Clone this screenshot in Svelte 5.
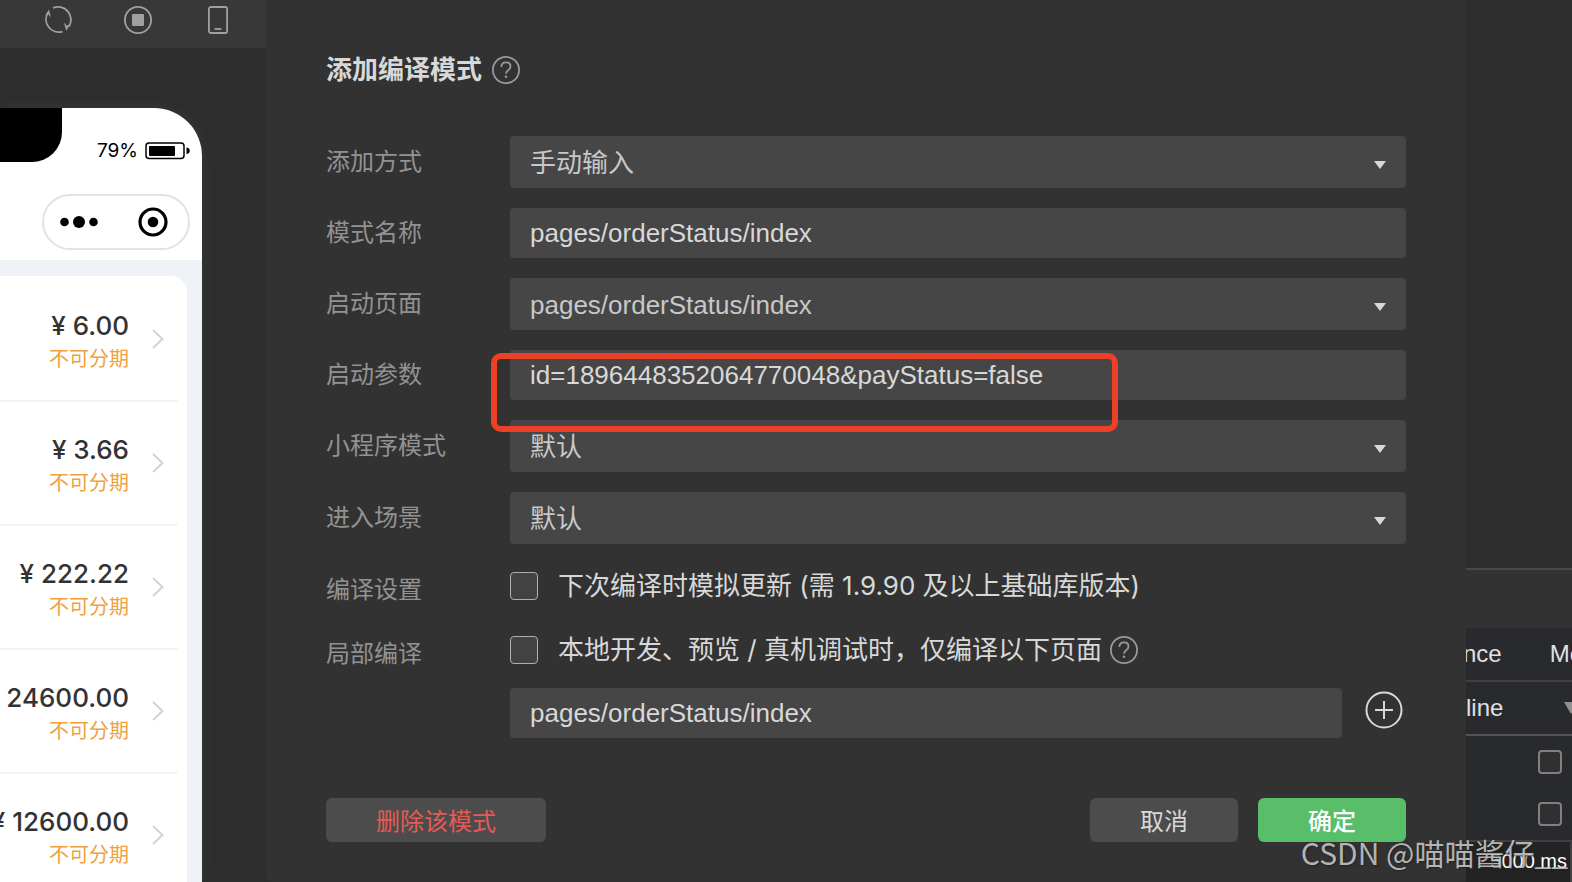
<script lang="ts">
	type Field = {
		id: string;
		label: string;
		type: 'select' | 'input';
		value: string;
		marked?: boolean;
	};

	const fields: Field[] = [
		{ id: 'method', label: '添加方式', type: 'select', value: '手动输入' },
		{ id: 'name', label: '模式名称', type: 'input', value: 'pages/orderStatus/index' },
		{ id: 'page', label: '启动页面', type: 'select', value: 'pages/orderStatus/index' },
		{
			id: 'query',
			label: '启动参数',
			type: 'input',
			value: 'id=1896448352064770048&payStatus=false',
			marked: true
		},
		{ id: 'app-mode', label: '小程序模式', type: 'select', value: '默认' },
		{ id: 'scene', label: '进入场景', type: 'select', value: '默认' }
	];

	const orders = ['6.00', '3.66', '222.22', '24600.00', '12600.00'];

	let simulateUpdate = $state(false);
	let partialCompile = $state(false);
	let partialPage = $state('pages/orderStatus/index');
</script>

{#snippet helpIcon()}
	<svg class="help" viewBox="0 0 28 28" aria-hidden="true">
		<circle cx="14" cy="14" r="13.1" />
		<path d="M9.4 11c0-2.9 1.9-4.6 4.6-4.6s4.5 1.6 4.5 4c0 1.8-.9 2.8-2.4 3.9-1.5 1.1-2 1.8-2 3.5" />
		<circle class="dot" cx="14" cy="20.8" r="1.3" />
	</svg>
{/snippet}

<div class="workspace">
	<aside class="simulator">
		<div class="toolbar">
			<button aria-label="刷新">
				<svg viewBox="0 0 28 28">
					<path d="M9 2A12.8 12.8 0 0 1 25 20.5M18.5 25.6A12.8 12.8 0 0 1 4 6.5" />
					<path class="solid" d="M4.900 3.600 1.300 9.800 4.200 8.200 7 11.500zM22.300 24.800 26 18.500 22.600 19.600 19.800 16.500z" />
				</svg>
			</button>
			<button aria-label="停止">
				<svg viewBox="0 0 28 28">
					<circle cx="14" cy="14" r="13.1" />
					<rect class="solid" x="8" y="8" width="12" height="12" rx="1" />
				</svg>
			</button>
			<button aria-label="设备">
				<svg viewBox="0 0 28 28">
					<rect x="4.9" y="1" width="18.2" height="26" rx="2" />
					<path d="M10.5 23h7" />
				</svg>
			</button>
		</div>

		<div class="phone">
			<div class="status-bar">
				<div class="notch"></div>
				<span>79%</span>
				<svg class="battery" viewBox="0 0 45 18">
					<rect x="1" y="1" width="38" height="15.5" rx="3" fill="none" stroke="#000" stroke-width="1.5" />
					<rect x="4" y="4" width="26" height="10" rx="1" />
					<path d="M41.5 5.5c2 0 3.3 1.5 3.3 3.3s-1.3 3.3-3.3 3.3z" />
				</svg>
			</div>
			<div class="nav-bar">
				<div class="capsule">
					<svg class="dots" viewBox="0 0 38 12">
						<circle cx="4.5" cy="6" r="4.3" />
						<circle cx="19" cy="6" r="6" />
						<circle cx="33.5" cy="6" r="4.3" />
					</svg>
					<svg class="target" viewBox="0 0 30 30">
						<circle cx="15" cy="15" r="13" fill="none" stroke="#000" stroke-width="3.2" />
						<circle cx="15" cy="15" r="5.3" />
					</svg>
				</div>
			</div>
			<div class="orders">
				<ul>
					{#each orders as price}
						<li>
							<div class="amount">
								<span class="price">¥ {price}</span>
								<span class="note">不可分期</span>
							</div>
							<svg viewBox="0 0 12 20"><path d="M1 1l9.5 9L1 19" /></svg>
						</li>
					{/each}
				</ul>
			</div>
		</div>
	</aside>

	<main class="dialog">
		<h1><span>添加编译模式</span> {@render helpIcon()}</h1>

		<form>
			{#each fields as { id, label, type, value, marked }}
				<label class="row-label" for={id}>{label}</label>
				<div class="control" class:marked>
					{#if type === 'select'}
						<select {id}>
							<option>{value}</option>
						</select>
						<svg class="arrow" viewBox="0 0 12 8"><path d="M0 0h12L6 8z" /></svg>
					{:else}
						<input {id} type="text" {value} />
					{/if}
				</div>
			{/each}

			<span class="row-label check-label">编译设置</span>
			<div class="check">
				<input id="update" type="checkbox" bind:checked={simulateUpdate} />
				<label for="update">下次编译时模拟更新 (需 1.9.90 及以上基础库版本)</label>
			</div>

			<span class="row-label check-label">局部编译</span>
			<div class="partial">
				<div class="check">
					<input id="partial" type="checkbox" bind:checked={partialCompile} />
					<label for="partial">本地开发、预览 / 真机调试时，仅编译以下页面</label>
					{@render helpIcon()}
				</div>
				<div class="pages">
					<input type="text" aria-label="编译页面" bind:value={partialPage} />
					<button type="button" aria-label="添加页面">
						<svg viewBox="0 0 38 38">
							<circle cx="19" cy="19" r="17.5" />
							<path d="M19 10v18M10 19h18" />
						</svg>
					</button>
				</div>
			</div>
		</form>

		<footer>
			<button class="delete">删除该模式</button>
			<button>取消</button>
			<button class="confirm">确定</button>
		</footer>
	</main>

	<aside class="devtools">
		<div class="editor"></div>
		<div class="panel-head"></div>
		<div class="tabs names">
			<span>nce</span>
			<span>Me</span>
		</div>
		<div class="tabs filter">
			<span>line</span>
			<svg viewBox="0 0 14 12"><path d="M0 0h14L7 12z" /></svg>
		</div>
		<div class="options">
			<input type="checkbox" aria-label="选项一" />
			<input type="checkbox" aria-label="选项二" />
		</div>
		<div class="timeline">5000 ms</div>
	</aside>

	<div class="watermark">CSDN @喵喵酱仔__</div>
</div>

<style>
	:global(body) {
		background: #2d2d2d;
	}

	.workspace {
		position: relative;
		display: grid;
		grid-template-columns: 266px minmax(0, 1fr) 106px;
		min-height: 100vh;
		overflow: hidden;
		background: #2d2d2d;
		color: #d8d8d8;
		font-family: Inter, 'Noto Sans CJK SC', sans-serif;
	}

	*,
	*::after {
		box-sizing: border-box;
	}

	button,
	input,
	select {
		margin: 0;
		padding: 0;
		border: 0;
		color: inherit;
		font-family: 'Liberation Sans', 'Noto Sans CJK SC', sans-serif;
	}

	svg {
		display: block;
		flex: none;
	}

	/* simulator */
	.simulator {
		display: flex;
		flex-direction: column;
		height: 100vh;
		overflow: hidden;
	}

	.toolbar {
		display: flex;
		flex: none;
		justify-content: flex-end;
		gap: 52px;
		height: 48px;
		padding: 6px 34px 0 0;
		background: #383838;
	}

	.toolbar button {
		width: 28px;
		height: 28px;
		background: none;
	}

	.toolbar svg {
		fill: none;
		stroke: #a0a0a0;
		stroke-width: 1.8;
	}

	.toolbar .solid {
		fill: #a0a0a0;
		stroke: none;
	}

	.phone {
		display: flex;
		flex: 1;
		flex-direction: column;
		width: 202px;
		margin-top: 60px;
		overflow: hidden;
		border-top-right-radius: 48px;
		background: #fff;
		color: #000;
		box-shadow: 0 0 16px rgba(255, 255, 255, 0.06);
	}

	.status-bar {
		display: flex;
		flex: none;
		justify-content: flex-end;
		align-items: center;
		height: 85px;
		padding-right: 12px;
		font-size: 19px;
	}

	.notch {
		align-self: flex-start;
		width: 62px;
		height: 54px;
		margin-right: auto;
		border-bottom-right-radius: 30px;
		background: #000;
	}

	.battery {
		width: 45px;
		margin-left: 7px;
	}

	.nav-bar {
		display: flex;
		flex: none;
		justify-content: flex-end;
		height: 67px;
		padding: 1px 12px 0 0;
	}

	.capsule {
		display: flex;
		justify-content: space-between;
		align-items: center;
		width: 148px;
		height: 56px;
		padding: 0 20px 0 16px;
		border: 2px solid #e2e2e2;
		border-radius: 28px;
	}

	.dots {
		width: 38px;
	}

	.target {
		width: 30px;
	}

	.orders {
		flex: 1;
		padding: 16px 15px 0 0;
		background: #eff3f7;
	}

	ul {
		height: 100%;
		margin: 0;
		padding: 2px 9px 0 0;
		border-top-right-radius: 16px;
		background: #fff;
		list-style: none;
	}

	li {
		display: flex;
		justify-content: flex-end;
		align-items: center;
		gap: 23px;
		height: 124px;
		padding-right: 14px;
		border-bottom: 2px solid #f5f5f5;
	}

	.amount {
		display: flex;
		flex-direction: column;
		align-items: flex-end;
		padding-top: 6px;
		white-space: nowrap;
	}

	.price {
		color: #333;
		font-size: 26px;
		font-weight: 500;
		line-height: 34px;
	}

	.note {
		color: #f0a040;
		font-size: 20px;
		line-height: 32px;
	}

	li svg {
		width: 12px;
		fill: none;
		stroke: #d2d2d2;
		stroke-width: 2;
	}

	/* dialog */
	.dialog {
		align-self: start;
		min-height: 100vh;
		padding: 50px 60px 40px;
		border-radius: 0 0 6px 6px;
		background: #323232;
	}

	h1 {
		display: flex;
		align-items: center;
		gap: 10px;
		height: 40px;
		margin: 0 0 46px;
		font-size: 26px;
		font-weight: 700;
	}

	h1 span {
		padding-bottom: 6px;
	}

	.help {
		width: 28px;
		fill: none;
		stroke: #999;
		stroke-width: 1.8;
	}

	.help .dot {
		fill: #999;
		stroke: none;
	}

	form {
		display: grid;
		grid-template-columns: 184px minmax(0, 1fr);
		row-gap: 20px;
	}

	.row-label {
		align-self: center;
		color: #929292;
		font-size: 24px;
		line-height: 36px;
	}

	.control {
		position: relative;
		display: grid;
		align-items: center;
	}

	.control > * {
		grid-area: 1 / 1;
	}

	select,
	input[type='text'] {
		width: 100%;
		min-width: 0;
		height: 50px;
		padding: 0 20px;
		border-radius: 4px;
		outline: none;
		background: #464646;
		font-size: 26px;
	}

	select {
		height: 52px;
		padding-top: 2px;
		appearance: none;
		color: #c8c8c8;
	}

	.arrow {
		justify-self: end;
		width: 12px;
		margin: 6px 20px 0 0;
		fill: #d8d8d8;
		pointer-events: none;
	}

	.marked::after {
		content: '';
		position: absolute;
		z-index: 1;
		top: 3px;
		left: -19px;
		width: 70%;
		height: 79px;
		border: 6px solid #ec4126;
		border-radius: 10px;
		pointer-events: none;
	}

	.check {
		display: flex;
		align-items: center;
		height: 44px;
		font-size: 26px;
		white-space: nowrap;
	}

	.check label {
		margin: 0 8px 0 20px;
		padding-bottom: 6px;
	}

	.check-label {
		align-self: start;
		padding-top: 8px;
	}

	input[type='checkbox'] {
		flex: none;
		width: 28px;
		height: 28px;
		appearance: none;
		border: 1px solid #b0b0b0;
		border-radius: 4px;
		background: #424242;
	}

	.partial {
		display: flex;
		flex-direction: column;
		gap: 16px;
	}

	.pages {
		display: flex;
		gap: 23px;
		padding-right: 3px;
	}

	.pages button {
		flex: none;
		width: 38px;
		height: 38px;
		margin-top: 3px;
		background: none;
	}

	.pages svg {
		fill: none;
		stroke: #d8d8d8;
		stroke-width: 2;
	}

	footer {
		display: flex;
		gap: 20px;
		margin-top: 60px;
	}

	footer button {
		width: 148px;
		height: 44px;
		padding-bottom: 2px;
		border-radius: 6px;
		background: #4c4c4c;
		color: #d8d8d8;
		font-size: 24px;
	}

	footer .delete {
		width: 220px;
		margin-right: auto;
		color: #e65a55;
	}

	footer .confirm {
		background: #58be6a;
		color: #fff;
		font-weight: 500;
	}

	/* devtools */
	.devtools {
		display: flex;
		flex-direction: column;
		height: 100vh;
		overflow: hidden;
		background: #292a2e;
		color: #e0e0e0;
		font-family: 'Liberation Sans', sans-serif;
		font-size: 24px;
	}

	.editor {
		flex: 1;
		background: #2d2d2d;
	}

	.panel-head {
		height: 60px;
		border-top: 2px solid #484848;
		background: #323232;
	}

	.tabs {
		display: flex;
		justify-content: space-between;
		align-items: center;
		height: 54px;
		margin-right: -8px;
		padding-right: 2px;
		border-bottom: 2px solid #404040;
	}

	.names {
		margin: 0 -13px 0 -3px;
	}

	.filter {
		border-color: #545454;
	}

	.filter svg {
		width: 14px;
		fill: #909090;
	}

	.options {
		display: flex;
		flex-direction: column;
		align-items: flex-end;
		gap: 28px;
		height: 106px;
		padding: 14px 10px 0 0;
		border-bottom: 2px solid #404040;
	}

	.options input[type='checkbox'] {
		width: 24px;
		height: 24px;
		border: 2px solid #808080;
		background: #303030;
	}

	.timeline {
		height: 40px;
		padding-right: 3px;
		border-right: 2px solid #404040;
		background: #232323;
		color: #fff;
		font-size: 20px;
		line-height: 38px;
		text-align: right;
	}

	.watermark {
		position: absolute;
		right: 4px;
		bottom: 8px;
		color: rgba(220, 220, 220, 0.78);
		font-family: 'Noto Sans CJK SC', sans-serif;
		font-size: 30px;
		font-weight: 400;
		line-height: 44px;
		text-shadow: 1px 1px 2px #222;
		pointer-events: none;
	}
</style>
